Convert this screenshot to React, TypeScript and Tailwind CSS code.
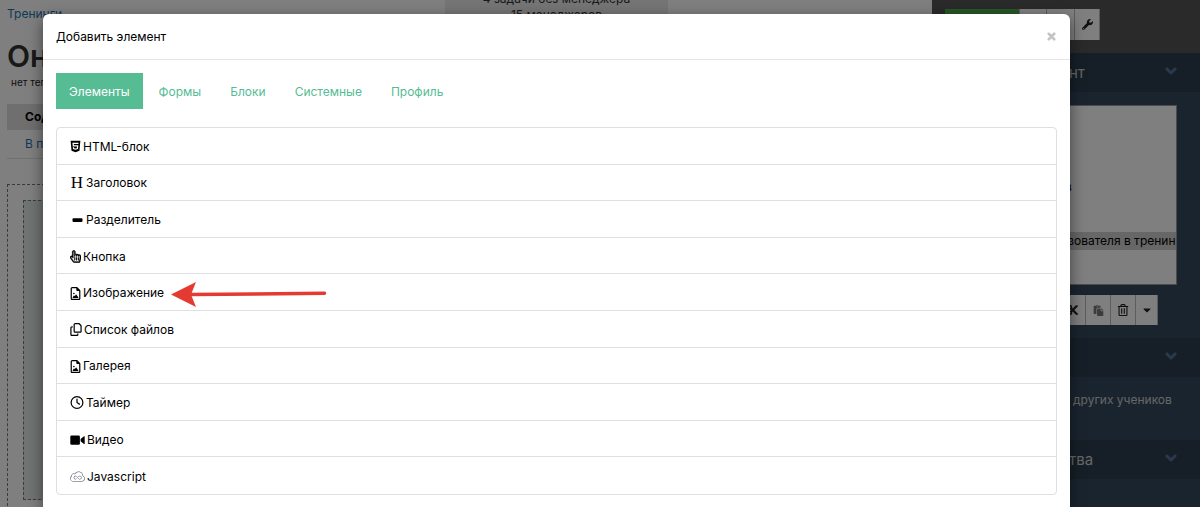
import type { ReactNode } from "react";
import { clsx } from "clsx";
import {
  FaHtml5,
  FaRegHandPointer,
  FaJsfiddle,
  FaCaretDown,
  FaWrench,
  FaCut,
  FaPaste,
  FaRegTrashAlt,
  FaChevronDown,
} from "react-icons/fa";
import { FaRegCopy, FaRegClock, FaRegFileImage, FaXmark } from "react-icons/fa6";

const TABS = ["Элементы", "Формы", "Блоки", "Системные", "Профиль"];

interface Item {
  label: string;
  icon: ReactNode;
  marked?: boolean;
}

function DividerIcon() {
  return (
    <svg viewBox="0 0 14 12" className="h-3 w-3.5" aria-hidden="true">
      <rect x="2.500" y="4.300" width="10" height="3.600" rx="0.800" />
    </svg>
  );
}

function VideoIcon() {
  return (
    <svg viewBox="0 0 15 12" className="h-3 w-[15px]" aria-hidden="true">
      <rect x="0.300" y="1.500" width="9.600" height="9.200" rx="1.300" />
      <path d="M10.600 5L14 2.300Q14.700 2 14.700 2.800V9.400Q14.700 10.200 14 9.900L10.600 7.200Z" />
    </svg>
  );
}

const ITEMS: Item[] = [
  { label: "HTML-блок", icon: <FaHtml5 className="h-[13px] w-[11px]" /> },
  {
    label: "Заголовок",
    icon: <span aria-hidden="true" className="w-3.5 text-center font-['Liberation_Serif',serif] text-[17px] leading-4">H</span>,
  },
  { label: "Разделитель", icon: <DividerIcon /> },
  { label: "Кнопка", icon: <FaRegHandPointer className="h-[13px] w-[11px]" stroke="currentColor" strokeWidth={12} /> },
  { label: "Изображение", icon: <FaRegFileImage className="h-[13px] w-[11px]" />, marked: true },
  { label: "Список файлов", icon: <FaRegCopy className="h-[13px] w-3" /> },
  { label: "Галерея", icon: <FaRegFileImage className="h-[13px] w-[11px]" /> },
  { label: "Таймер", icon: <FaRegClock className="h-[13px] w-3.5" /> },
  { label: "Видео", icon: <VideoIcon /> },
  { label: "Javascript", icon: <FaJsfiddle className="h-[15px] w-[15px] text-gray-700" /> },
];

function Arrow() {
  return (
    <svg viewBox="0 0 156 26" className="absolute left-[114px] top-[7px] h-[26px] w-[156px]" aria-hidden="true">
      <path d="M20 13.500L153.500 12.300" stroke="#e43a32" strokeWidth="3.500" strokeLinecap="round" />
      <path d="M0 13.600L25 1L20 13.500L25 26Z" fill="#e43a32" />
    </svg>
  );
}

function Main() {
  return (
    <main className="min-w-0 flex-1 overflow-hidden bg-white px-[7px]">
      <div className="flex h-9">
        <a href="#" className="w-[438px] pt-1 leading-5 text-[#1a72ae]">Тренинги</a>
        <p className="-mt-[9px] w-[223px] bg-[#ebebeb] text-center leading-4 text-[#333]">
          4 задачи без менеджера
          <br />
          15 менеджеров
        </p>
      </div>
      <h1 className="text-3xl font-semibold leading-10 text-[#333]">Он</h1>
      <p className="pl-1 text-[10px] leading-3 text-[#222]">нет тег</p>
      <div className="mt-4 bg-[#dedede] pl-[18px] font-bold leading-[26px] text-black">Сод</div>
      <div className="border-b border-[#e0e0e0] pl-[18px] leading-7">
        <a href="#" className="text-[#1a72ae]">В п</a>
      </div>
      <div className="mt-[25px] border border-dashed border-[#777] p-[15px]">
        <div className="h-[300px] border border-dashed border-[#777] bg-[#e0e8e6]" />
      </div>
    </main>
  );
}

interface ToolButtonProps {
  label: string;
  className?: string;
  children?: ReactNode;
}

function ToolButton({ label, className = "bg-white", children }: ToolButtonProps) {
  return (
    <button
      type="button"
      aria-label={label}
      className={clsx("flex h-full items-center justify-center border-r border-[#bbb] text-[#222]", className)}
    >
      {children}
    </button>
  );
}

function SectionHead({ title }: { title?: string }) {
  return (
    <div className="flex h-[39px] items-center justify-between bg-[#2c3e50] pl-[137px] pr-[23px] text-[15px] text-[#ccc]">
      <h2>{title}</h2>
      <FaChevronDown className="mb-1 h-3 w-3 text-[#56739f]" stroke="currentColor" strokeWidth={44} />
    </div>
  );
}

function Sidebar() {
  return (
    <aside className="w-[268px] shrink-0 overflow-hidden bg-[#34495e]">
      <div className="h-[53px] bg-[#555] px-[13px] pt-[9px]">
        <div className="flex h-[31px]">
          <ToolButton label="Сохранить" className="w-[75px] bg-[#4cae4c]" />
          <ToolButton label="Назад" className="w-[27px] bg-white" />
          <ToolButton label="Вперёд" className="w-[28px] bg-white" />
          <ToolButton label="Настройки" className="w-[25px] bg-white">
            <FaWrench className="h-[11px] w-[11px]" />
          </ToolButton>
        </div>
      </div>
      <SectionHead title="нт" />
      <div className="h-[246px] px-[13px] pt-[13px]">
        <ul className="mr-[10px] h-[180px] border border-[#999] bg-white pt-[72px] leading-[18px] text-black">
          <li className="pb-9 pl-[119px]">в</li>
          <li className="whitespace-nowrap bg-[#cecece] pl-[122px]">зователя в тренин</li>
        </ul>
        <div className="mt-[10px] flex h-[30px]">
          <ToolButton label="Вырезать" className="ml-[116px] w-[25px] bg-white">
            <FaCut className="h-3 w-3" />
          </ToolButton>
          <ToolButton label="Вставить" className="w-[25px] bg-white">
            <FaPaste className="h-[11px] w-[11px] text-[#777]" />
          </ToolButton>
          <ToolButton label="Удалить" className="w-[25px] bg-white">
            <FaRegTrashAlt className="h-3 w-3" />
          </ToolButton>
          <ToolButton label="Ещё" className="w-[22px] bg-white">
            <FaCaretDown className="h-3 w-3" />
          </ToolButton>
        </div>
      </div>
      <SectionHead />
      <p className="h-[63px] pl-[141px] pt-[13px] leading-5 text-[#ccc]">других учеников</p>
      <SectionHead title="тва" />
    </aside>
  );
}

function AddElementDialog() {
  return (
    <section
      role="dialog"
      aria-labelledby="dialog-title"
      className="ml-[43px] mr-[130px] mt-[14px] flex-1 rounded-t-md bg-white text-black shadow-[0_5px_15px_rgba(0,0,0,0.5)]"
    >
      <header className="flex h-[46px] items-center justify-between border-b border-[#e5e5e5] px-[13px]">
        <h2 id="dialog-title">Добавить элемент</h2>
        <button type="button" aria-label="Закрыть" className="text-[#c4c4c4]">
          <FaXmark className="h-[11px] w-[11px]" strokeWidth={60} stroke="currentColor" />
        </button>
      </header>
      <div className="px-[13px] pt-[13px]">
        <nav className="flex gap-[3px]" role="tablist">
          {TABS.map((tab, i) => (
            <button
              key={tab}
              type="button"
              role="tab"
              aria-selected={i === 0}
              className={clsx("h-9 px-[13px] pt-0.5", i === 0 ? "bg-[#56bc94] text-white" : "text-[#56bc94]")}
            >
              {tab}
            </button>
          ))}
        </nav>
        <ul className="mt-[18px] grid h-[368px] auto-rows-fr divide-y divide-[#dfdfdf] rounded border border-[#dfdfdf]">
          {ITEMS.map(({ label, icon, marked }) => (
            <li key={label} className="relative">
              <button type="button" className="flex h-full w-full items-center gap-0.5 px-[13px] pt-0.5 text-left">
                {icon}
                <span>{label}</span>
              </button>
              {marked && <Arrow />}
            </li>
          ))}
        </ul>
      </div>
    </section>
  );
}

export default function App() {
  return (
    <div className="relative flex h-screen overflow-hidden font-['Inter','Liberation_Sans',sans-serif] text-xs">
      <Main />
      <Sidebar />
      <div className="absolute inset-0 flex flex-col overflow-hidden bg-black/50">
        <AddElementDialog />
      </div>
    </div>
  );
}
